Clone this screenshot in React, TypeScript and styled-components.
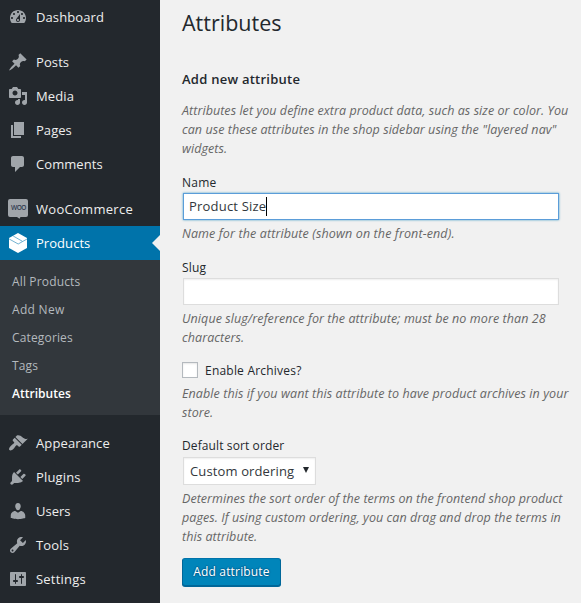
import React from 'react';
import styled, { createGlobalStyle } from 'styled-components';

const GlobalStyle = createGlobalStyle`
  * { box-sizing: border-box; }
  body {
    margin: 0;
    background: #f1f1f1;
    color: #32373c;
    font-family: 'Open Sans', 'Noto Sans', sans-serif;
    font-size: 12px;
    overflow: hidden;
  }
`;

const Page = styled.div`
  display: flex;
  width: 581px;
  height: 603px;
  overflow: hidden;
`;

const Sidebar = styled.nav`
  flex: 0 0 160px;
  background: #23282d;
`;

const MenuGroup = styled.div`
  display: flex;
  flex-direction: column;
  margin-bottom: 11px;
`;

const MenuItem = styled.a<{ $active?: boolean }>`
  position: relative;
  display: flex;
  align-items: center;
  gap: 8px;
  height: 34px;
  padding-left: 8px;
  color: ${p => (p.$active ? '#fff' : '#eee')};
  background: ${p => (p.$active ? '#0073aa' : 'transparent')};
  fill: ${p => (p.$active ? '#fff' : '#a0a5aa')};
`;

const MenuLabel = styled.span<{ $track: number }>`
  font-size: 13px;
  line-height: 18px;
  letter-spacing: ${p => p.$track}px;
  white-space: nowrap;
`;

const ActiveArrow = styled.span`
  position: absolute;
  right: 0;
  top: 9px;
  border: 8px solid transparent;
  border-left-width: 0;
  border-right-color: #f1f1f1;
`;

const Submenu = styled.div`
  display: flex;
  flex-direction: column;
  padding: 8px 0 7px 12px;
  background: #32373c;
`;

const SubmenuItem = styled.a<{ $track: number; $current?: boolean }>`
  height: 28px;
  line-height: 28px;
  letter-spacing: ${p => p.$track}px;
  color: ${p => (p.$current ? '#fff' : '#b4b9be')};
  font-weight: ${p => (p.$current ? 600 : 400)};
`;

const Main = styled.main`
  flex: 1;
  display: flex;
  flex-direction: column;
  align-items: flex-start;
  padding: 8px 0 0 22px;
`;

const Title = styled.h1`
  margin: 0;
  color: #23282d;
  font-size: 21.5px;
  font-weight: 400;
  line-height: 29px;
`;

const SectionTitle = styled.h2`
  margin: 32px 0 0;
  color: #23282d;
  font-size: 13px;
  font-weight: 600;
  line-height: 20px;
  letter-spacing: 0.25px;
`;

const Intro = styled.div`
  padding: 12px 0 15px;
`;

const Field = styled.div<{ $gap: number }>`
  display: flex;
  flex-direction: column;
  align-items: flex-start;
  margin-bottom: ${p => p.$gap}px;
`;

const Label = styled.label<{ $track?: number }>`
  color: #23282d;
  line-height: 19px;
  letter-spacing: ${p => p.$track ?? 0.15}px;
`;

const TextBox = styled.div<{ $focused?: boolean }>`
  display: flex;
  align-items: center;
  width: 376px;
  height: 27px;
  margin: 1px 0 4px 1px;
  padding-left: 5px;
  background: #fff;
  border: 1px solid ${p => (p.$focused ? '#5b9dd9' : '#ddd')};
  box-shadow: ${p =>
    p.$focused ? '0 0 2px rgba(30, 140, 190, 0.8)' : 'inset 0 1px 2px rgba(0, 0, 0, 0.07)'};
  font-size: 13px;
  line-height: 25px;
  letter-spacing: 0.2px;
`;

const Caret = styled.span`
  width: 1px;
  height: 19px;
  background: #000;
`;

const HelpLine = styled.span<{ $track: number }>`
  display: block;
  color: #666;
  font-size: 12.5px;
  font-style: italic;
  line-height: 19px;
  letter-spacing: ${p => p.$track}px;
  white-space: nowrap;
`;

const CheckRow = styled.div`
  display: flex;
  align-items: center;
  gap: 7px;
  height: 18px;
  margin-bottom: 5px;
`;

const Checkbox = styled.span`
  width: 16px;
  height: 16px;
  background: #fff;
  border: 1px solid #b4b9be;
  box-shadow: inset 0 1px 2px rgba(0, 0, 0, 0.1);
`;

const Select = styled.div`
  display: flex;
  align-items: center;
  justify-content: space-between;
  width: 133px;
  height: 28px;
  margin: 2px 0 4px 1px;
  padding: 0 6px;
  background: #fff;
  border: 1px solid #ddd;
  box-shadow: inset 0 1px 2px rgba(0, 0, 0, 0.07);
  font-size: 13px;
  line-height: 26px;
  letter-spacing: 0.13px;
`;

const SelectArrow = styled.svg`
  width: 6px;
  height: 6px;
  margin-bottom: 2px;
  fill: #23282d;
`;

const SubmitButton = styled.button`
  width: 99px;
  height: 28px;
  padding: 0;
  color: #fff;
  background: #0085ba;
  border: 1px solid;
  border-color: #0073aa #006799 #006799;
  border-radius: 3px;
  box-shadow: 0 1px 0 #006799;
  font-family: inherit;
  font-size: 12px;
  line-height: 26px;
  letter-spacing: 0.17px;
  text-shadow: 0 -1px 1px #006799, 1px 0 1px #006799, 0 1px 1px #006799, -1px 0 1px #006799;
`;

const ICONS = {
  dashboard: 'M3.76 16h12.48c1.1-1.37 1.76-3.11 1.76-5 0-4.42-3.58-8-8-8s-8 3.58-8 8c0 1.89.66 3.63 1.76 5zM10 4c.55 0 1 .45 1 1s-.45 1-1 1-1-.45-1-1 .45-1 1-1zM6 6c.55 0 1 .45 1 1s-.45 1-1 1-1-.45-1-1 .45-1 1-1zm8 0c.55 0 1 .45 1 1s-.45 1-1 1-1-.45-1-1 .45-1 1-1zm-5.37 5.55L12 7v6c0 1.1-.9 2-2 2s-2-.9-2-2c0-.57.24-1.08.63-1.45zM4 10c.55 0 1 .45 1 1s-.45 1-1 1-1-.45-1-1 .45-1 1-1zm12 0c.55 0 1 .45 1 1s-.45 1-1 1-1-.45-1-1 .45-1 1-1zm-5 3c0-.55-.45-1-1-1s-1 .45-1 1 .45 1 1 1 1-.45 1-1z',
  posts: 'M10.44 3.02l1.82-1.82 6.36 6.35-1.83 1.82c-1.05-.68-2.48-.57-3.41.36l-.75.75c-.92.93-1.04 2.35-.35 3.41l-1.83 1.82-2.41-2.41-2.8 2.79c-.42.42-3.38 2.71-3.8 2.29s1.86-3.39 2.28-3.81l2.79-2.79L4.1 9.36l1.83-1.82c1.05.69 2.48.57 3.4-.36l.75-.75c.93-.92 1.05-2.35.36-3.41z',
  media: 'M13 11V4c0-.55-.45-1-1-1h-1.67L9 1H5L3.67 3H2c-.55 0-1 .45-1 1v7c0 .55.45 1 1 1h10c.55 0 1-.45 1-1zM7 4.5c1.38 0 2.5 1.12 2.5 2.5S8.38 9.5 7 9.5 4.5 8.38 4.5 7 5.62 4.5 7 4.5zM14 6h5v10.5c0 1.38-1.12 2.5-2.5 2.5S14 17.88 14 16.5s1.12-2.5 2.5-2.5c.17 0 .34.02.5.05V9h-3V6zm-4 8.05V13h2v3.5c0 1.38-1.12 2.5-2.5 2.5S7 17.88 7 16.5 8.12 14 9.5 14c.17 0 .34.02.5.05z',
  pages: 'M6 15V2h10v13H6zm-1 1h8v2H3V5h2v11z',
  comments: 'M5 2h9c1.1 0 2 .9 2 2v7c0 1.1-.9 2-2 2h-2l-5 5v-5H5c-1.1 0-2-.9-2-2V4c0-1.1.9-2 2-2z',
  appearance: 'M14.48 11.06L7.41 3.99l1.5-1.5c.5-.56 2.3-.47 3.51.32 1.21.8 1.43 1.28 2.91 2.1 1.18.64 2.45 1.26 4.45.85zm-.71.71L6.7 4.7 4.93 6.47c-.39.39-.39 1.02 0 1.41l1.06 1.06c.39.39.39 1.03 0 1.42-.6.6-1.43 1.11-2.21 1.69-.35.26-.7.53-1.01.84C1.43 14.23.4 16.08 1.4 17.07c.99 1 2.84-.03 4.18-1.36.31-.31.58-.66.85-1.02.57-.78 1.08-1.61 1.69-2.21.39-.39 1.02-.39 1.41 0l1.06 1.06c.39.39 1.02.39 1.41 0z',
  plugins: 'M13.11 4.36L9.87 7.6 8 5.73l3.24-3.24c.35-.34 1.05-.2 1.56.32.52.51.66 1.21.31 1.55zm-8 1.77l.91-1.12 9.01 9.01-1.19.84c-.71.71-2.63 1.16-3.82 1.16H6.14L4.9 17.26c-.59.59-1.54.59-2.12 0-.59-.58-.59-1.53 0-2.12l1.24-1.24v-3.88c0-1.13.4-3.19 1.09-3.89zm7.26 3.97l3.24-3.24c.34-.35 1.04-.21 1.55.31.52.51.66 1.21.31 1.55l-3.24 3.25z',
  users: 'M10 9.25c-2.27 0-2.73-3.44-2.73-3.44C7 4.02 7.82 2 9.97 2c2.16 0 2.98 2.02 2.71 3.81 0 0-.41 3.44-2.68 3.44zm0 2.57L12.72 10c2.39 0 4.52 2.33 4.52 4.53v2.49s-3.65 1.13-7.24 1.13c-3.65 0-7.24-1.13-7.24-1.13v-2.49c0-2.25 1.94-4.48 4.47-4.48z',
  tools: 'M16.68 9.77c-1.34 1.34-3.3 1.67-4.95.99l-5.41 6.52c-.99.99-2.59.99-3.58 0s-.99-2.59 0-3.57l6.52-5.42c-.68-1.65-.35-3.61.99-4.95 1.28-1.28 3.12-1.62 4.72-1.06l-2.89 2.89 2.82 2.82 2.86-2.87c.53 1.58.18 3.39-1.08 4.65zM3.81 16.21c.4.39 1.04.39 1.43 0 .4-.4.4-1.04 0-1.43-.39-.4-1.03-.4-1.43 0-.39.39-.39 1.03 0 1.43z',
  settings: 'M18 16V4c0-.55-.45-1-1-1H3c-.55 0-1 .45-1 1v12c0 .55.45 1 1 1h14c.55 0 1-.45 1-1zM8 11h1c.55 0 1 .45 1 1s-.45 1-1 1H8v1.5c0 .28-.22.5-.5.5s-.5-.22-.5-.5V13H6c-.55 0-1-.45-1-1s.45-1 1-1h1V5.5c0-.28.22-.5.5-.5s.5.22.5.5V11zm5-2h-1c-.55 0-1-.45-1-1s.45-1 1-1h1V5.5c0-.28.22-.5.5-.5s.5.22.5.5V7h1c.55 0 1 .45 1 1s-.45 1-1 1h-1v5.5c0 .28-.22.5-.5.5s-.5-.22-.5-.5V9z',
};

function Icon({ name }: { name: keyof typeof ICONS }) {
  return (
    <svg width="20" height="20" viewBox="0 0 20 20">
      <path fillRule="evenodd" d={ICONS[name]} />
    </svg>
  );
}

const WooBadge = styled.span`
  position: relative;
  display: flex;
  justify-content: center;
  width: 20px;
  height: 20px;
`;

const WooText = styled.span`
  position: absolute;
  top: 4px;
  left: 3px;
  color: #2f3a50;
  font-size: 6.5px;
  font-weight: 600;
  line-height: 9px;
  letter-spacing: -0.5px;
`;

function WooIcon() {
  return (
    <WooBadge>
      <svg width="20" height="20" viewBox="0 0 20 20">
        <path d="M2 0h16a2 2 0 0 1 2 2v14a2 2 0 0 1-2 2h-5.500l-1 1.800L9 18H2a2 2 0 0 1-2-2V2a2 2 0 0 1 2-2z" />
      </svg>
      <WooText>WOO</WooText>
    </WooBadge>
  );
}

function BoxIcon() {
  return (
    <svg width="20" height="20" viewBox="0 0 20 20">
      <path d="M10 0l9 5v10l-9 5-9-5V5z" />
      <path d="M1.200 6l9 5 8.800-5M5.200 3l9 5.200" fill="none" stroke="#0073aa" strokeWidth=".55" />
    </svg>
  );
}

export default function App() {
  return (
    <>
      <GlobalStyle />
      <Page>
        <Sidebar>
          <MenuGroup>
            <MenuItem><Icon name="dashboard" /><MenuLabel $track={0.1}>Dashboard</MenuLabel></MenuItem>
          </MenuGroup>
          <MenuGroup>
            <MenuItem><Icon name="posts" /><MenuLabel $track={0.1}>Posts</MenuLabel></MenuItem>
            <MenuItem><Icon name="media" /><MenuLabel $track={0.13}>Media</MenuLabel></MenuItem>
            <MenuItem><Icon name="pages" /><MenuLabel $track={0.05}>Pages</MenuLabel></MenuItem>
            <MenuItem><Icon name="comments" /><MenuLabel $track={0.07}>Comments</MenuLabel></MenuItem>
          </MenuGroup>
          <MenuGroup>
            <MenuItem><WooIcon /><MenuLabel $track={0.29}>WooCommerce</MenuLabel></MenuItem>
            <MenuItem $active><BoxIcon /><MenuLabel $track={0.05}>Products</MenuLabel><ActiveArrow /></MenuItem>
            <Submenu>
              <SubmenuItem $track={0.15}>All Products</SubmenuItem>
              <SubmenuItem $track={0.3}>Add New</SubmenuItem>
              <SubmenuItem $track={0.15}>Categories</SubmenuItem>
              <SubmenuItem $track={0.15}>Tags</SubmenuItem>
              <SubmenuItem $track={0.03} $current>Attributes</SubmenuItem>
            </Submenu>
          </MenuGroup>
          <MenuGroup>
            <MenuItem><Icon name="appearance" /><MenuLabel $track={0.12}>Appearance</MenuLabel></MenuItem>
            <MenuItem><Icon name="plugins" /><MenuLabel $track={0.15}>Plugins</MenuLabel></MenuItem>
            <MenuItem><Icon name="users" /><MenuLabel $track={0}>Users</MenuLabel></MenuItem>
            <MenuItem><Icon name="tools" /><MenuLabel $track={0.15}>Tools</MenuLabel></MenuItem>
            <MenuItem><Icon name="settings" /><MenuLabel $track={0.21}>Settings</MenuLabel></MenuItem>
          </MenuGroup>
        </Sidebar>
        <Main>
          <Title>Attributes</Title>
          <SectionTitle>Add new attribute</SectionTitle>
          <Intro>
            <HelpLine $track={0.06}>Attributes let you define extra product data, such as size or color. You</HelpLine>
            <HelpLine $track={0.06}>can use these attributes in the shop sidebar using the "layered nav"</HelpLine>
            <HelpLine $track={0.06}>widgets.</HelpLine>
          </Intro>
          <Field $gap={15}>
            <Label $track={0.23}>Name</Label>
            <TextBox $focused>Product Size<Caret /></TextBox>
            <HelpLine $track={0.12}>Name for the attribute (shown on the front-end).</HelpLine>
          </Field>
          <Field $gap={14}>
            <Label>Slug</Label>
            <TextBox />
            <HelpLine $track={0.08}>Unique slug/reference for the attribute; must be no more than 28</HelpLine>
            <HelpLine $track={0.08}>characters.</HelpLine>
          </Field>
          <Field $gap={14}>
            <CheckRow><Checkbox /><Label $track={0.21}>Enable Archives?</Label></CheckRow>
            <HelpLine $track={0.09}>Enable this if you want this attribute to have product archives in your</HelpLine>
            <HelpLine $track={0.08}>store.</HelpLine>
          </Field>
          <Field $gap={12}>
            <Label $track={0.11}>Default sort order</Label>
            <Select>
              Custom ordering
              <SelectArrow viewBox="0 0 6 6"><path d="M0 0h6L3 6z" /></SelectArrow>
            </Select>
            <HelpLine $track={0.04}>Determines the sort order of the terms on the frontend shop product</HelpLine>
            <HelpLine $track={0.06}>pages. If using custom ordering, you can drag and drop the terms in</HelpLine>
            <HelpLine $track={0.06}>this attribute.</HelpLine>
          </Field>
          <SubmitButton>Add attribute</SubmitButton>
        </Main>
      </Page>
    </>
  );
}
